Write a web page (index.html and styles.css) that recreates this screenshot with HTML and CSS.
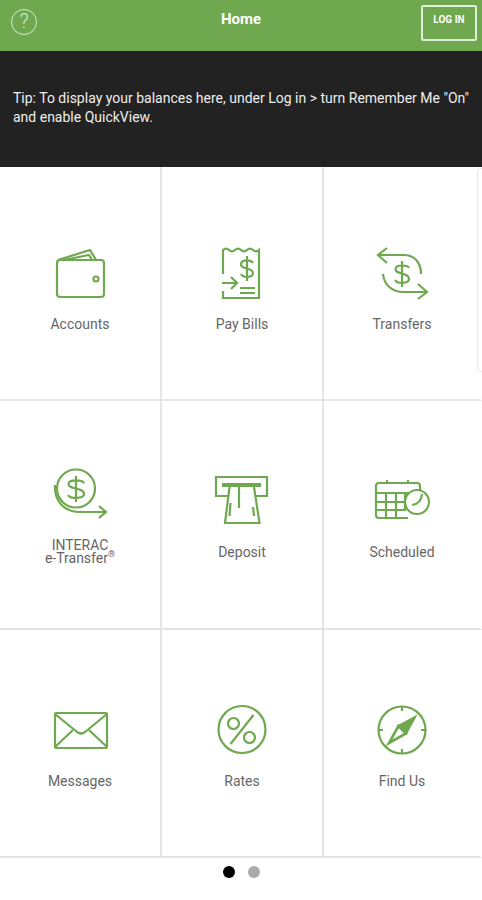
FILE: index.html
```html
<!DOCTYPE html>
<html lang="en">
<head>
    <meta charset="UTF-8">
    <meta name="viewport" content="width=device-width, initial-scale=1.0">
    <title>Home</title>
    <link rel="stylesheet" href="styles.css">
</head>
<body>
    <!-- Top bar -->
    <header class="topbar">
        <span class="help">?</span>
        <h1 class="title">Home</h1>
        <button class="login">LOG IN</button>
    </header>

    <!-- QuickView tip -->
    <div class="tip">
        <p>Tip: To display your balances here, under Log in &gt; turn Remember Me "On" and enable QuickView.</p>
    </div>

    <!-- Main menu -->
    <main class="menu">
        <div class="side-handle"></div>

        <a class="cell">
            <svg class="icon" viewBox="0 0 56 56">
                <rect x="5" y="15" width="47" height="37" rx="3"/>
                <path d="M6 15 L38 5 L44 15"/>
                <path d="M12 15 L37 10 L40 15"/>
                <circle cx="44" cy="34" r="2.500"/>
            </svg>
            <span class="label">Accounts</span>
        </a>
        <a class="cell">
            <svg class="icon" viewBox="0 0 56 56">
                <path d="M9 29 V5 Q12 2 15 5 T21 5 T27 5 T33 5 T39 5 T45 5 V53 H9 V46"/>
                <path d="M8 38 H23 M17 32 L23 38 L17 44"/>
                <path d="M39 18 C37 14.500 27 14 27 19.500 C27 25 39 22 39 28 C39 33 29 33 27 29 M33 11 V36"/>
                <path d="M26 43 H41 M26 48 H41"/>
            </svg>
            <span class="label">Pay Bills</span>
        </a>
        <a class="cell">
            <svg class="icon" viewBox="0 0 56 56">
                <path d="M47 29 C47 17 40 10 30 10 H4 M13 3 L4 10 L13 18"/>
                <path d="M9 29 C10 39 17 47 30 47 H52 M44 39 L53 47 L44 54"/>
                <path d="M35 23 C34 20 22 19 21.500 24 C21 30 35 27 35 34 C35 39 23 39 21 35 M28 16 V42"/>
            </svg>
            <span class="label">Transfers</span>
        </a>

        <a class="cell">
            <svg class="icon" viewBox="0 0 56 56">
                <circle cx="24" cy="15.500" r="19"/>
                <path d="M3 12 C2 28 12 39 28 39 H53 M47 33 L54 39 L47 45"/>
                <path d="M32 10.500 C31 6.500 16.500 6 16.500 11 C16.500 17 32 14 32 21 C32 26 18 26 16 22 M24 3 V29"/>
            </svg>
            <span class="label"><span>INTERAC<br>e-Transfer<sup>®</sup></span></span>
        </a>
        <a class="cell">
            <svg class="icon" viewBox="0 0 56 56">
                <path d="M15 23 H2 V4 H53 V23 H41"/>
                <path d="M8 12 H47" class="heavy"/>
                <path d="M15.500 14 L11 50 H45.500 L40 14"/>
                <path d="M25 12 V35 M16.500 30 L15.500 43 M39 34 L40 43"/>
            </svg>
            <span class="label">Deposit</span>
        </a>
        <a class="cell">
            <svg class="icon" viewBox="0 0 56 56">
                <path d="M34 45 H5 Q2 45 2 42 V13 Q2 10 5 10 H43 Q46 10 46 13 V17"/>
                <path d="M2 20 H36 M2 29 H31 M2 37 H31 M12 20 V45 M22 20 V45 M31 20 V38"/>
                <path d="M13 7 V11 M34 7 V11"/>
                <circle cx="43" cy="29" r="12"/>
                <path d="M48 21 Q47 31 38 32"/>
            </svg>
            <span class="label">Scheduled</span>
        </a>

        <a class="cell">
            <svg class="icon" viewBox="0 0 56 56">
                <rect x="3" y="11" width="52" height="35" rx="1"/>
                <path d="M3 12 L25 30 Q29 33 33 30 L55 12"/>
                <path d="M3 45 L21 28 M55 45 L37 28"/>
            </svg>
            <span class="label">Messages</span>
        </a>
        <a class="cell">
            <svg class="icon" viewBox="0 0 56 56">
                <circle cx="28" cy="27.500" r="23.500"/>
                <circle cx="19.500" cy="21.500" r="5.500"/>
                <circle cx="35.500" cy="35.500" r="5.500"/>
                <path d="M39.500 13 L16.500 42"/>
            </svg>
            <span class="label">Rates</span>
        </a>
        <a class="cell">
            <svg class="icon" viewBox="0 0 56 56">
                <circle cx="28" cy="28" r="23.500"/>
                <path d="M28 5 V9 M28 47 V51 M5 28 H9 M47 28 H51"/>
                <path d="M41 15 L32 31.500 L24.500 24 Z" class="solid"/>
                <path d="M15 41 L24.500 24 L32 31.500 Z" class="thick"/>
            </svg>
            <span class="label">Find Us</span>
        </a>
    </main>

    <!-- Page dots -->
    <div class="dots">
        <span class="dot active"></span>
        <span class="dot"></span>
    </div>
</body>
</html>
```

FILE: styles.css
```css
body {
    font-family: Roboto, "Liberation Sans", sans-serif;
    margin: 0;
    padding: 0;
    background-color: #fff;
}
.topbar {
    height: 51px;
    box-sizing: border-box;
    padding: 5px 5px 0 11px;
    display: flex;
    align-items: flex-start;
    background-color: #6fa84f;
    color: #fff;
}
.help {
    width: 26px;
    height: 26px;
    margin-top: 4px;
    box-sizing: border-box;
    border: 1.5px solid #d9e8cf;
    border-radius: 50%;
    color: #d9e8cf;
    font-size: 20px;
    font-weight: 300;
    line-height: 23px;
    text-align: center;
}
.title {
    flex: 1;
    margin: 5px 0 0;
    padding-left: 24px;
    font-size: 15px;
    font-weight: 700;
    line-height: 18px;
    text-align: center;
}
.login {
    width: 56px;
    height: 36px;
    padding: 0 0 8px;
    background: none;
    border: 2px solid #dfeed6;
    border-radius: 2px;
    color: #fff;
    font-family: inherit;
    font-size: 10px;
    font-weight: 700;
}
.tip {
    height: 116px;
    box-sizing: border-box;
    padding: 38px 8px 0 13px;
    background-color: #222;
    color: #eee;
    font-size: 14px;
    line-height: 19px;
}
.tip p {
    margin: 0;
}
.menu {
    position: relative;
    display: grid;
    grid-template-columns: 162px 162px 158px;
    grid-template-rows: 234px 229px 228px;
}
.side-handle {
    position: absolute;
    top: 1px;
    right: -4px;
    width: 9px;
    height: 204px;
    box-sizing: border-box;
    border: 1.5px solid #e6e6e6;
    border-radius: 5px;
}
.cell {
    display: flex;
    flex-direction: column;
    align-items: center;
    box-sizing: border-box;
    padding-top: 72px;
    border-right: 2px solid #e4e4e4;
    border-bottom: 2px solid #e4e4e4;
    color: #666;
}
.cell:nth-child(-n+4) {
    padding-top: 78px;
}
.cell:nth-child(3n+1) {
    border-right-color: transparent;
}
.icon {
    width: 56px;
    height: 56px;
    overflow: visible;
    fill: none;
    stroke: #6fa84f;
    stroke-width: 2.2;
}
.icon .heavy {
    stroke-width: 4;
}
.icon .solid {
    fill: #6fa84f;
}
.icon .thick {
    stroke-width: 2.6;
}
.label {
    height: 30px;
    margin-top: 8px;
    display: flex;
    align-items: center;
    justify-content: center;
    font-size: 14px;
    line-height: 13px;
    text-align: center;
}
.label sup {
    font-size: 9px;
    line-height: 0;
}
.dots {
    height: 28px;
    display: flex;
    align-items: center;
    justify-content: center;
    gap: 13px;
}
.dot {
    width: 12px;
    height: 12px;
    border-radius: 50%;
    background-color: #aaa;
}
.dot.active {
    background-color: #000;
}
```
